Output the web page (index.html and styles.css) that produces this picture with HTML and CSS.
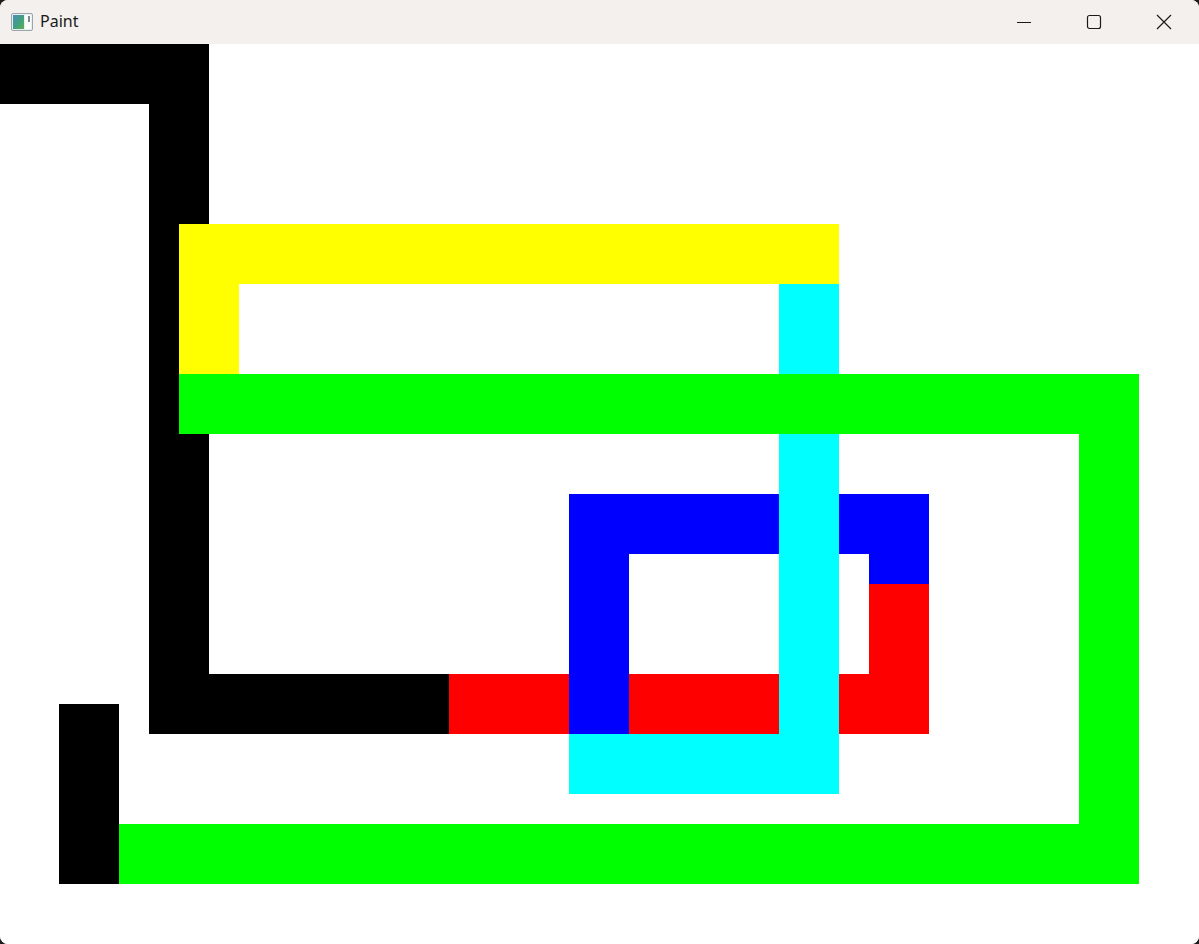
FILE: index.html
```html
<!DOCTYPE html>
<html>
<head>
<meta charset="utf-8">
<link rel="stylesheet" href="styles.css">
</head>
<body>
<div class="window">
  <div class="titlebar">
    <div class="title">
      <svg class="app-icon" width="22" height="18" viewBox="0 0 22 18">
        <defs>
          <linearGradient id="g" x1="0" y1="0" x2="1" y2="1">
            <stop offset="0" stop-color="#4f8fb5"/>
            <stop offset="0.5" stop-color="#3f9e86"/>
            <stop offset="1" stop-color="#5fb04f"/>
          </linearGradient>
        </defs>
        <rect x="0.5" y="0.5" width="21" height="17" rx="1.5" fill="#e9eef0" stroke="#9aa6ac"/>
        <rect x="2" y="2" width="11" height="14" fill="url(#g)"/>
        <rect x="14" y="2" width="6" height="14" fill="#fbfcfc"/>
        <rect x="17" y="3" width="2" height="6" fill="#7d8a90"/>
      </svg>
      <span class="title-text">Paint</span>
    </div>
    <div class="controls">
      <div class="ctl">
        <svg width="16" height="16" viewBox="0 0 16 16"><path d="M1 8.5h14" stroke="#1a1a1a" stroke-width="1"/></svg>
      </div>
      <div class="ctl">
        <svg width="16" height="16" viewBox="0 0 16 16"><rect x="1.5" y="1.5" width="13" height="13" rx="2" fill="none" stroke="#1a1a1a" stroke-width="1.2"/></svg>
      </div>
      <div class="ctl">
        <svg width="16" height="16" viewBox="0 0 16 16"><path d="M1 1L15 15M15 1L1 15" stroke="#1a1a1a" stroke-width="1.2"/></svg>
      </div>
    </div>
  </div>
  <div class="canvas">
    <svg class="drawing" width="1199" height="900" viewBox="0 0 1199 900">
      <g fill="#000000">
        <rect x="0" y="0" width="209" height="60"/>
        <rect x="149" y="0" width="60" height="690"/>
        <rect x="149" y="630" width="300" height="60"/>
        <rect x="59" y="660" width="60" height="180"/>
      </g>
      <g fill="#ff0000">
        <rect x="449" y="630" width="480" height="60"/>
        <rect x="869" y="540" width="60" height="150"/>
      </g>
      <g fill="#0000ff">
        <rect x="569" y="450" width="360" height="60"/>
        <rect x="569" y="450" width="60" height="240"/>
        <rect x="869" y="450" width="60" height="90"/>
      </g>
      <g fill="#00ffff">
        <rect x="779" y="240" width="60" height="510"/>
        <rect x="569" y="690" width="270" height="60"/>
      </g>
      <g fill="#ffff00">
        <rect x="179" y="180" width="660" height="60"/>
        <rect x="179" y="180" width="60" height="150"/>
      </g>
      <g fill="#00ff00">
        <rect x="179" y="330" width="960" height="60"/>
        <rect x="1079" y="330" width="60" height="510"/>
        <rect x="119" y="780" width="1020" height="60"/>
      </g>
    </svg>
  </div>
</div>
</body>
</html>
```
FILE: styles.css
```css
html, body {
  margin: 0;
  padding: 0;
  background: #1c1c1c;
}
body {
  width: 1199px;
  height: 944px;
  overflow: hidden;
  font-family: "Segoe UI", "Noto Sans", "Open Sans", sans-serif;
}
.window {
  width: 1199px;
  height: 944px;
  display: flex;
  flex-direction: column;
  border-radius: 8px;
  overflow: hidden;
  background: #ffffff;
}
.titlebar {
  height: 44px;
  flex: 0 0 44px;
  background: #f4f0ee;
  display: flex;
  align-items: center;
  justify-content: space-between;
}
.title {
  display: flex;
  align-items: center;
  padding-left: 11px;
}
.app-icon {
  display: block;
}
.title-text {
  margin-left: 7px;
  font-size: 16px;
  color: #1a1a1a;
  line-height: 1;
  padding-bottom: 2px;
}
.controls {
  display: flex;
  height: 100%;
}
.ctl {
  width: 70px;
  height: 100%;
  display: flex;
  align-items: center;
  justify-content: center;
}
.ctl svg {
  display: block;
}
.canvas {
  flex: 1;
  background: #ffffff;
}
.drawing {
  display: block;
  shape-rendering: crispEdges;
}
```
